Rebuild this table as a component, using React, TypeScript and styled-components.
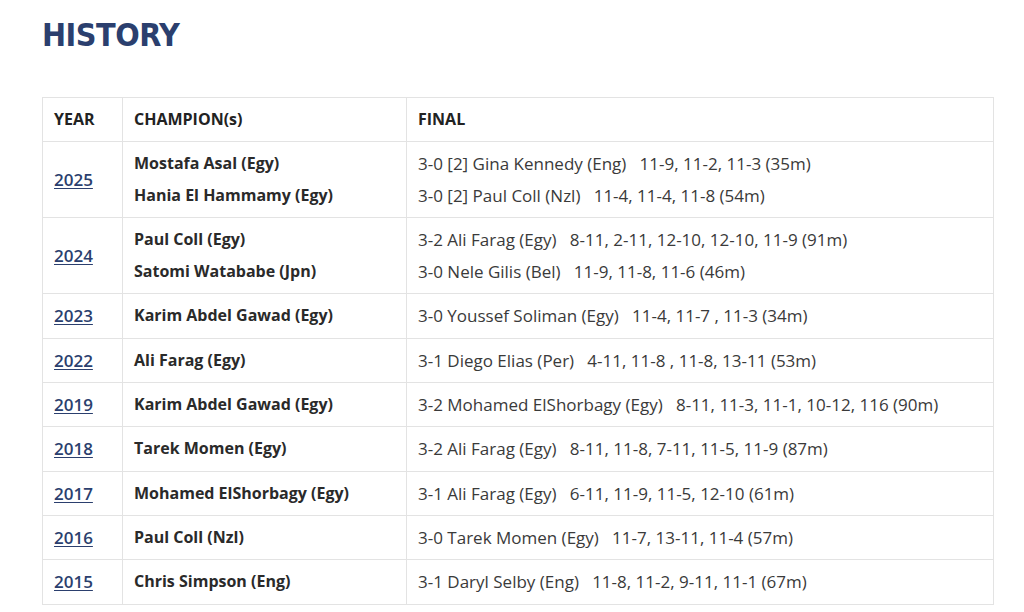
import React from "react";
import styled, { createGlobalStyle } from "styled-components";

const GlobalStyle = createGlobalStyle`
  body {
    margin: 0;
    background: #ffffff;
    font-family: "Open Sans", "Noto Sans", sans-serif;
  }
`;

interface Edition {
  year: string;
  champions: string[];
  finals: string[];
}

const gap = "\u00a0\u00a0\u00a0";

const editions: Edition[] = [
  {
    year: "2025",
    champions: ["Mostafa Asal (Egy)", "Hania El Hammamy (Egy)"],
    finals: [
      `3-0 [2] Gina Kennedy (Eng)${gap}11-9, 11-2, 11-3 (35m)`,
      `3-0 [2] Paul Coll (Nzl)${gap}11-4, 11-4, 11-8 (54m)`,
    ],
  },
  {
    year: "2024",
    champions: ["Paul Coll (Egy)", "Satomi Watababe (Jpn)"],
    finals: [
      `3-2 Ali Farag (Egy)${gap}8-11, 2-11, 12-10, 12-10, 11-9 (91m)`,
      `3-0 Nele Gilis (Bel)${gap}11-9, 11-8, 11-6 (46m)`,
    ],
  },
  {
    year: "2023",
    champions: ["Karim Abdel Gawad (Egy)"],
    finals: [`3-0 Youssef Soliman (Egy)${gap}11-4, 11-7 , 11-3 (34m)`],
  },
  {
    year: "2022",
    champions: ["Ali Farag (Egy)"],
    finals: [`3-1 Diego Elias (Per)${gap}4-11, 11-8 , 11-8, 13-11 (53m)`],
  },
  {
    year: "2019",
    champions: ["Karim Abdel Gawad (Egy)"],
    finals: [`3-2 Mohamed ElShorbagy (Egy)${gap}8-11, 11-3, 11-1, 10-12, 116 (90m)`],
  },
  {
    year: "2018",
    champions: ["Tarek Momen (Egy)"],
    finals: [`3-2 Ali Farag (Egy)${gap}8-11, 11-8, 7-11, 11-5, 11-9 (87m)`],
  },
  {
    year: "2017",
    champions: ["Mohamed ElShorbagy (Egy)"],
    finals: [`3-1 Ali Farag (Egy)${gap}6-11, 11-9, 11-5, 12-10 (61m)`],
  },
  {
    year: "2016",
    champions: ["Paul Coll (Nzl)"],
    finals: [`3-0 Tarek Momen (Egy)${gap}11-7, 13-11, 11-4 (57m)`],
  },
  {
    year: "2015",
    champions: ["Chris Simpson (Eng)"],
    finals: [`3-1 Daryl Selby (Eng)${gap}11-8, 11-2, 9-11, 11-1 (67m)`],
  },
];

const Page = styled.div`
  padding: 14px 30px 0 42px;
`;

const Title = styled.h2`
  margin: 0 0 41px;
  font-family: "DejaVu Sans Condensed", "DejaVu Sans", sans-serif;
  font-weight: bold;
  font-size: 32px;
  line-height: 42px;
  color: #2b3f6e;
  letter-spacing: -0.5px;
`;

const Table = styled.table`
  width: 952px;
  table-layout: fixed;
  border-collapse: collapse;
  color: #333333;
`;

const HeadCell = styled.th<{ $width?: number }>`
  box-sizing: border-box;
  width: ${(p) => (p.$width ? `${p.$width}px` : "auto")};
  text-align: left;
  font-weight: 700;
  font-size: 16px;
  padding: 10px 11px;
  line-height: 23.3px;
  border: 1px solid #e3e3e3;
  color: #222222;
`;

const Cell = styled.td<{ $bold?: boolean }>`
  padding: 10px 11px;
  line-height: 23.3px;
  border: 1px solid #e3e3e3;
  vertical-align: middle;
  white-space: nowrap;
  font-size: ${(p) => (p.$bold ? "16px" : "17px")};
  font-weight: ${(p) => (p.$bold ? 700 : 400)};
  color: ${(p) => (p.$bold ? "#2a2a2a" : "#3a3a3a")};
`;

const YearLink = styled.a`
  color: #2b3f6e;
  font-weight: 600;
  text-decoration: underline;
  text-underline-offset: 2px;
`;

const Lines = styled.div`
  display: flex;
  flex-direction: column;
  gap: 8.5px;
`;

export default function App() {
  return (
    <>
      <GlobalStyle />
      <Page>
        <Title>HISTORY</Title>
        <Table>
          <thead>
            <tr>
              <HeadCell $width={80}>YEAR</HeadCell>
              <HeadCell $width={284}>CHAMPION(s)</HeadCell>
              <HeadCell>FINAL</HeadCell>
            </tr>
          </thead>
          <tbody>
            {editions.map((e) => (
              <tr key={e.year}>
                <Cell>
                  <YearLink href="#">{e.year}</YearLink>
                </Cell>
                <Cell $bold>
                  <Lines>
                    {e.champions.map((c) => (
                      <span key={c}>{c}</span>
                    ))}
                  </Lines>
                </Cell>
                <Cell>
                  <Lines>
                    {e.finals.map((f) => (
                      <span key={f}>{f}</span>
                    ))}
                  </Lines>
                </Cell>
              </tr>
            ))}
          </tbody>
        </Table>
      </Page>
    </>
  );
}
